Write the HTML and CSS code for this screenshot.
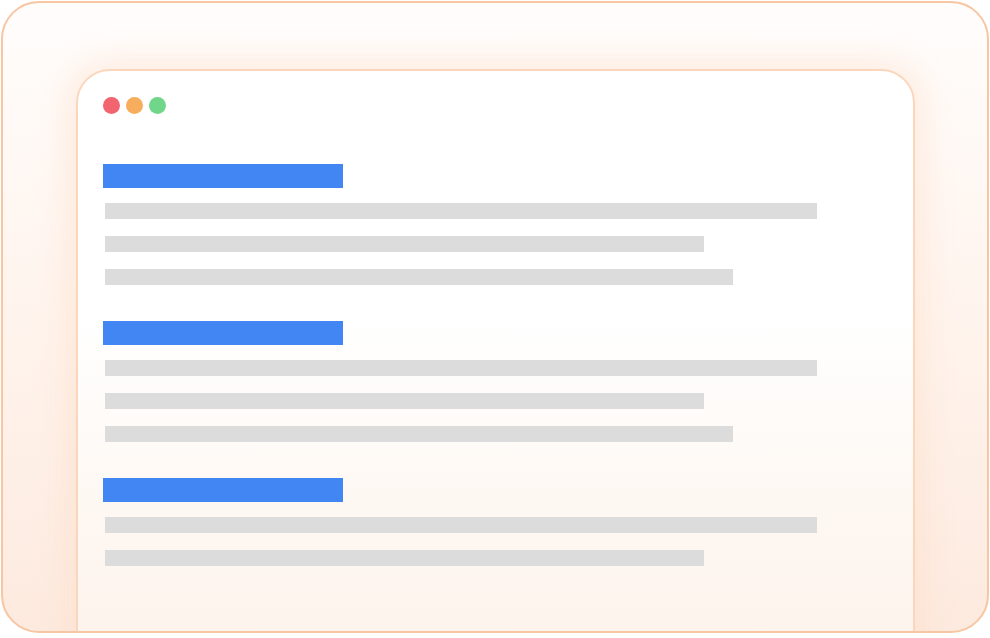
FILE: index.html
```html
<!DOCTYPE html>
<html lang="en">
<head>
    <meta charset="UTF-8">
    <title>Document preview</title>
    <link rel="stylesheet" href="styles.css">
</head>
<body>

    <div class="frame">
        <div class="window">
            <div class="dots">
                <span class="dot red"></span>
                <span class="dot orange"></span>
                <span class="dot green"></span>
            </div>

            <div class="section">
                <div class="heading"></div>
                <div class="line long"></div>
                <div class="line short"></div>
                <div class="line mid"></div>
            </div>

            <div class="section">
                <div class="heading"></div>
                <div class="line long"></div>
                <div class="line short"></div>
                <div class="line mid"></div>
            </div>

            <div class="section">
                <div class="heading"></div>
                <div class="line long"></div>
                <div class="line short"></div>
            </div>
        </div>
    </div>

</body>
</html>
```

FILE: styles.css
```css
body {
    margin: 0;
    padding: 1px 1px 0 1px;
    background: #ffffff;
    font-family: "Liberation Sans", Arial, sans-serif;
}

.frame {
    box-sizing: border-box;
    width: 988px;
    height: 632px;
    border: 2px solid #f7c6a3;
    border-radius: 38px;
    background: linear-gradient(180deg, #fffdfc 0%, #fff4ed 50%, #fdeadf 100%);
    padding: 66px 72px 0 73px;
    overflow: hidden;
}

.window {
    box-sizing: border-box;
    height: 620px;
    border: 2px solid #fad6bd;
    border-radius: 34px;
    background: linear-gradient(180deg, #ffffff 0%, #ffffff 40%, #fef8f3 70%, #fdf2ea 100%);
    box-shadow: 0 0 32px 8px rgba(252, 218, 192, 0.45);
    padding: 26px 0 0 25px;
}

.dots {
    display: flex;
    gap: 6px;
}

.dot {
    flex-shrink: 0;
    width: 17px;
    height: 17px;
    border-radius: 50%;
}

.red {
    background: #f2646f;
}

.orange {
    background: #f6ad5c;
}

.green {
    background: #6fd68a;
}

.section {
    display: flex;
    flex-direction: column;
    align-items: flex-start;
    margin-top: 50px;
}

.section + .section {
    margin-top: 36px;
}

.heading {
    width: 240px;
    height: 24px;
    background: #4286f4;
    margin-bottom: 15px;
}

.line {
    height: 16px;
    background: #dcdcdc;
    margin-left: 2px;
    margin-bottom: 17px;
}

.line:last-child {
    margin-bottom: 0;
}

.long {
    width: 712px;
}

.short {
    width: 599px;
}

.mid {
    width: 628px;
}
```
